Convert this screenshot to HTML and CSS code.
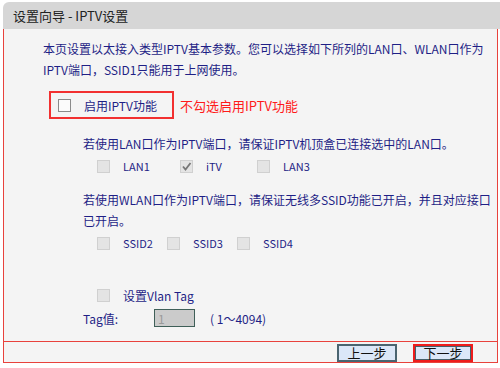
FILE: index.html
```html
<!DOCTYPE html>
<html lang="zh-CN">
<head>
<meta charset="utf-8"/>
<meta content="width=device-width, initial-scale=1.0" name="viewport"/>
<title>设置向导 - IPTV设置</title>
<link rel="stylesheet" href="styles.css">
</head>
<body>
<div class="wizard">
  <div class="wizard-head">设置向导 - IPTV设置</div>
  <div class="wizard-body">
    <div class="content">
      <p class="intro">本页设置以太接入类型IPTV基本参数。您可以选择如下所列的LAN口、WLAN口作为<br>IPTV端口，SSID1只能用于上网使用。</p>

      <div class="enable-row">
        <div class="enable-box"><span class="cb cb-on"></span>启用IPTV功能</div>
        <span class="hint">不勾选启用IPTV功能</span>
      </div>

      <div class="section">
        <p class="note">若使用LAN口作为IPTV端口，请保证IPTV机顶盒已连接选中的LAN口。</p>
        <div class="opts opts-lan">
          <label class="opt"><span class="cb"></span>LAN1</label>
          <label class="opt"><span class="cb"><svg viewBox="0 0 13 13" width="13" height="13"><path d="M3 6.5 L5.5 9.5 L10.5 3" fill="none" stroke="#777" stroke-width="1.8"/></svg></span>iTV</label>
          <label class="opt"><span class="cb"></span>LAN3</label>
        </div>

        <p class="note">若使用WLAN口作为IPTV端口，请保证无线多SSID功能已开启，并且对应接口<br>已开启。</p>
        <div class="opts opts-ssid">
          <label class="opt"><span class="cb"></span>SSID2</label>
          <label class="opt"><span class="cb"></span>SSID3</label>
          <label class="opt"><span class="cb"></span>SSID4</label>
        </div>

        <div class="opts vlan-row">
          <label class="opt"><span class="cb"></span>设置Vlan Tag</label>
        </div>
        <div class="tag-row">
          <span class="tag-label">Tag值:</span>
          <input class="tag-input" type="text" value="1" disabled>
          <span class="tag-range">( 1～4094)</span>
        </div>
      </div>
    </div>
    <div class="foot">
      <button class="btn">上一步</button>
      <button class="btn btn-next">下一步</button>
    </div>
  </div>
</div>
</body>
</html>
```

FILE: styles.css
```css
body {
  margin: 0;
  background-color: #ffffff;
  font-family: "Noto Sans CJK SC", "DejaVu Sans", sans-serif;
  font-size: 12px;
}
.wizard {
  margin: 2px 2px 0 3px;
}
.wizard-head {
  height: 27px;
  line-height: 27px;
  margin-right: -2px;
  padding-left: 10px;
  background-color: #d6d6d6;
  border-radius: 6px 0 0 0;
  color: #222222;
  font-size: 13px;
}
.wizard-body {
  border: 1px solid #e8423c;
  border-top: none;
  background-color: #f4f4f4;
}
.content {
  padding: 9px 20px 12px 39px;
  color: #1f1f86;
}
.intro {
  margin: 0;
  line-height: 21px;
  white-space: nowrap;
}
.enable-row {
  display: flex;
  align-items: center;
  margin-top: 11px;
}
.enable-box {
  display: flex;
  align-items: center;
  width: 125px;
  height: 28px;
  margin-left: 6px;
  padding-left: 7px;
  box-sizing: border-box;
  border: 2px solid #f23030;
}
.enable-box .cb {
  margin-right: 13px;
}
.hint {
  margin-left: 6px;
  color: #ff1a1a;
  font-size: 13px;
}
.section {
  margin-left: 40px;
}
.note {
  margin: 14px 0 0;
  line-height: 21px;
  white-space: nowrap;
}
.note + .opts + .note {
  margin-top: 11px;
}
.opts {
  display: grid;
  align-items: center;
  height: 24px;
  padding-left: 14px;
}
.opts-lan {
  grid-template-columns: 83px 77px auto;
}
.opts-ssid {
  grid-template-columns: 70px 70px auto;
}
.vlan-row {
  grid-template-columns: auto;
  height: 23px;
  margin-top: 29px;
}
.opt {
  display: flex;
  align-items: center;
  font-size: 11px;
}
.vlan-row .opt {
  font-size: 12px;
}
.cb {
  display: inline-block;
  width: 13px;
  height: 13px;
  margin-right: 13px;
  box-sizing: border-box;
  border: 1px solid #d0d0d0;
  background-color: #e4e4e4;
  flex-shrink: 0;
}
.cb svg {
  display: block;
  margin: -1px;
}
.cb-on {
  border-color: #8a8a8a;
  background-color: #fbfbfb;
}
.tag-row {
  display: flex;
  align-items: center;
  height: 22px;
}
.tag-label {
  width: 71px;
}
.tag-input {
  width: 41px;
  height: 18px;
  box-sizing: border-box;
  padding: 0 3px;
  border: 1px solid #3f5f58;
  background-color: #cbcbcb;
  color: #9a9a9a;
  font-family: inherit;
  font-size: 12px;
}
.tag-range {
  margin-left: 15px;
}
.foot {
  display: flex;
  justify-content: flex-end;
  gap: 16px;
  height: 21px;
  padding: 2px 24px 0 0;
  box-sizing: border-box;
  border-top: 1px solid #e8423c;
}
.btn {
  width: 60px;
  height: 18px;
  padding: 0;
  border: 2px solid #4a6470;
  background-color: #dbe7f8;
  color: #111111;
  font-family: inherit;
  font-size: 13px;
  line-height: 14px;
}
.btn-next {
  border-color: #ee1c1c;
  box-shadow: inset 0 0 0 1px #46606a;
}
```
